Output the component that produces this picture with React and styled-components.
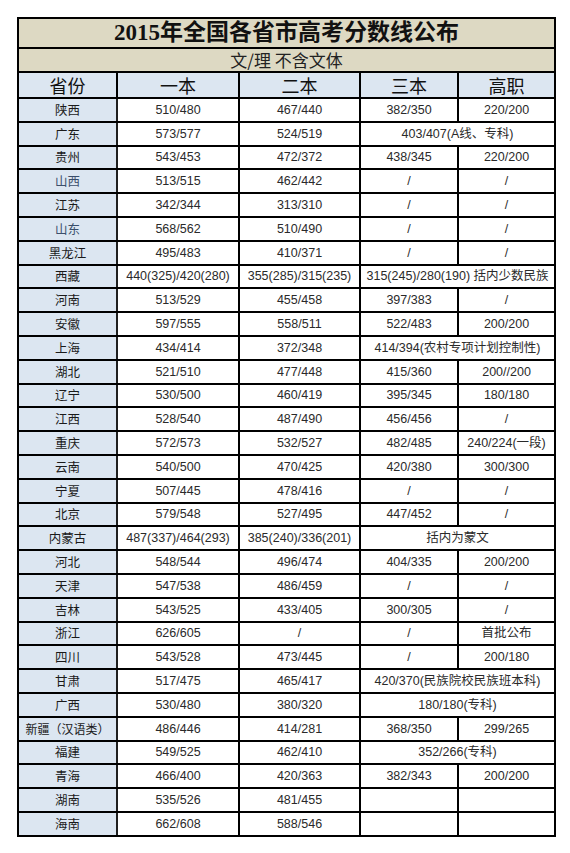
import React from 'react'
import { styled, createGlobalStyle } from 'styled-components'

const GlobalStyle = createGlobalStyle`
body {
  margin: 0;
  background: #ffffff;
  font-family: "Liberation Sans", "Noto Sans CJK SC", sans-serif;
}
`;

const Page = styled.div`
padding: 17px 0 0 17px;
`;

const Table = styled.table`
border-collapse: collapse;
table-layout: fixed;
width: 537px;
border: 2px solid #000;
`;

const TitleCell = styled.td`
height: 28px;
background: #ddd9c3;
border: 2px solid #000;
text-align: center;
font-family: "Liberation Serif", "Noto Sans CJK SC", serif;
font-weight: 700;
font-size: 23px;
color: #111;
padding: 0;
line-height: 28px;
`;

const SubTitleCell = styled.td`
height: 22px;
background: #ddd9c3;
border: 2px solid #000;
text-align: center;
font-family: "Noto Sans CJK SC", sans-serif;
font-size: 17px;
color: #222;
padding: 0;
line-height: 22px;
`;

const HeadCell = styled.th`
height: 24px;
background: #dce6f1;
border: 2px solid #000;
font-family: "Noto Sans CJK SC", sans-serif;
font-weight: 400;
font-size: 18px;
color: #111;
padding: 0;
line-height: 22px;
`;

const ProvCell = styled.td`
height: 21.8px;
background: #dce6f1;
border: 2px solid #000;
border-right: 2px solid #1f1f1f;
text-align: center;
font-family: "Noto Sans CJK SC", sans-serif;
font-size: ${props => props.$small ? '12px' : '12.5px'};
color: ${props => props.$blue ? '#3b4f6b' : '#1a1a1a'};
padding: 0;
white-space: nowrap;
line-height: 20px;
`;

const Cell = styled.td`
height: 21.8px;
background: #fff;
border: 2px solid #000;
text-align: center;
font-size: 12.5px;
color: #2a2a2a;
padding: 0;
white-space: nowrap;
line-height: 20px;
`;

const rows = [
  ['陕西', '510/480', '467/440', '382/350', '220/200'],
  ['广东', '573/577', '524/519', { merged: '403/407(A线、专科)' }],
  ['贵州', '543/453', '472/372', '438/345', '220/200'],
  ['山西', '513/515', '462/442', '/', '/', true],
  ['江苏', '342/344', '313/310', '/', '/'],
  ['山东', '568/562', '510/490', '/', '/', true],
  ['黑龙江', '495/483', '410/371', '/', '/'],
  ['西藏', '440(325)/420(280)', '355(285)/315(235)', { merged: '315(245)/280(190)  括内少数民族' }],
  ['河南', '513/529', '455/458', '397/383', '/'],
  ['安徽', '597/555', '558/511', '522/483', '200/200'],
  ['上海', '434/414', '372/348', { merged: '414/394(农村专项计划控制性)' }],
  ['湖北', '521/510', '477/448', '415/360', '200//200'],
  ['辽宁', '530/500', '460/419', '395/345', '180/180'],
  ['江西', '528/540', '487/490', '456/456', '/'],
  ['重庆', '572/573', '532/527', '482/485', '240/224(一段)'],
  ['云南', '540/500', '470/425', '420/380', '300/300'],
  ['宁夏', '507/445', '478/416', '/', '/'],
  ['北京', '579/548', '527/495', '447/452', '/'],
  ['内蒙古', '487(337)/464(293)', '385(240)/336(201)', { merged: '括内为蒙文' }],
  ['河北', '548/544', '496/474', '404/335', '200/200'],
  ['天津', '547/538', '486/459', '/', '/'],
  ['吉林', '543/525', '433/405', '300/305', '/'],
  ['浙江', '626/605', '/', '/', '首批公布'],
  ['四川', '543/528', '473/445', '/', '200/180'],
  ['甘肃', '517/475', '465/417', { merged: '420/370(民族院校民族班本科)' }],
  ['广西', '530/480', '380/320', { merged: '180/180(专科)' }],
  ['新疆（汉语类）', '486/446', '414/281', '368/350', '299/265'],
  ['福建', '549/525', '462/410', { merged: '352/266(专科)' }],
  ['青海', '466/400', '420/363', '382/343', '200/200'],
  ['湖南', '535/526', '481/455', '', ''],
  ['海南', '662/608', '588/546', '', ''],
];

const App = () => {
  return (
    <Page>
      <GlobalStyle />
      <Table>
        <colgroup>
          <col style={{ width: 99 }} />
          <col style={{ width: 122 }} />
          <col style={{ width: 121 }} />
          <col style={{ width: 98 }} />
          <col style={{ width: 97 }} />
        </colgroup>
        <tbody>
          <tr><TitleCell colSpan={5}>2015年全国各省市高考分数线公布</TitleCell></tr>
          <tr><SubTitleCell colSpan={5}>文/理 不含文体</SubTitleCell></tr>
          <tr>
            <HeadCell>省份</HeadCell>
            <HeadCell>一本</HeadCell>
            <HeadCell>二本</HeadCell>
            <HeadCell>三本</HeadCell>
            <HeadCell>高职</HeadCell>
          </tr>
          {rows.map((r) => (
            <tr key={r[0]}>
              <ProvCell $small={r[0].length > 3} $blue={r[5] === true}>{r[0]}</ProvCell>
              <Cell>{r[1]}</Cell>
              <Cell>{r[2]}</Cell>
              {typeof r[3] === 'object' ? (
                <Cell colSpan={2}>{r[3].merged}</Cell>
              ) : (
                <>
                  <Cell>{r[3]}</Cell>
                  <Cell>{r[4]}</Cell>
                </>
              )}
            </tr>
          ))}
        </tbody>
      </Table>
    </Page>
  )
}

export default App
